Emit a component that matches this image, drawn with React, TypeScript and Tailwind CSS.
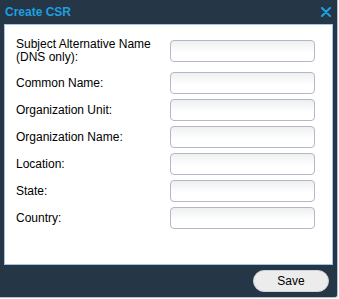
import React from "react";

const fields = [
  { label: "Subject Alternative Name\n(DNS only):", tall: true },
  { label: "Common Name:" },
  { label: "Organization Unit:" },
  { label: "Organization Name:" },
  { label: "Location:" },
  { label: "State:" },
  { label: "Country:" },
];

export default function App() {
  return (
    <div
      className="w-[338px] h-[298px] bg-[#253647] border-r border-b border-[#b9c1c9] rounded-br-[3px] flex flex-col"
      style={{ fontFamily: '"Liberation Sans", Arial, sans-serif' }}
    >
      <div className="h-[24px] flex items-center justify-between pl-[5px] pr-[6px]">
        <span className="text-[12px] font-bold text-[#1f9fde] leading-none">Create CSR</span>
        <svg width="10" height="10" viewBox="0 0 10 10" className="mt-[-1px]">
          <path d="M1 1 L9 9 M9 1 L1 9" stroke="#1f9fde" strokeWidth="2.2" strokeLinecap="round" />
        </svg>
      </div>
      <div className="mx-[4px] h-[241px] bg-white border border-[#9fc3ea] pt-[12px] pl-[11px] flex flex-col">
        {fields.map((f, i) => (
          <div
            key={i}
            className={`flex items-center ${f.tall ? "h-[28px] mb-[7px]" : "h-[22px] mb-[5px]"}`}
          >
            <div className="w-[154px] text-[12px] leading-[13px] text-black whitespace-pre-line">
              {f.label}
            </div>
            <div className="w-[145px] h-[22px] rounded-[4px] border border-[#b6b6ca] bg-gradient-to-b from-[#eef0f0] to-white to-60%" />
          </div>
        ))}
      </div>
      <div className="flex-1 flex justify-end items-start pt-[5px] pr-[8px]">
        <button className="w-[76px] h-[22px] rounded-full bg-[#ececec] border border-[#cfd3d6] text-[12px] text-black leading-none">
          Save
        </button>
      </div>
    </div>
  );
}
